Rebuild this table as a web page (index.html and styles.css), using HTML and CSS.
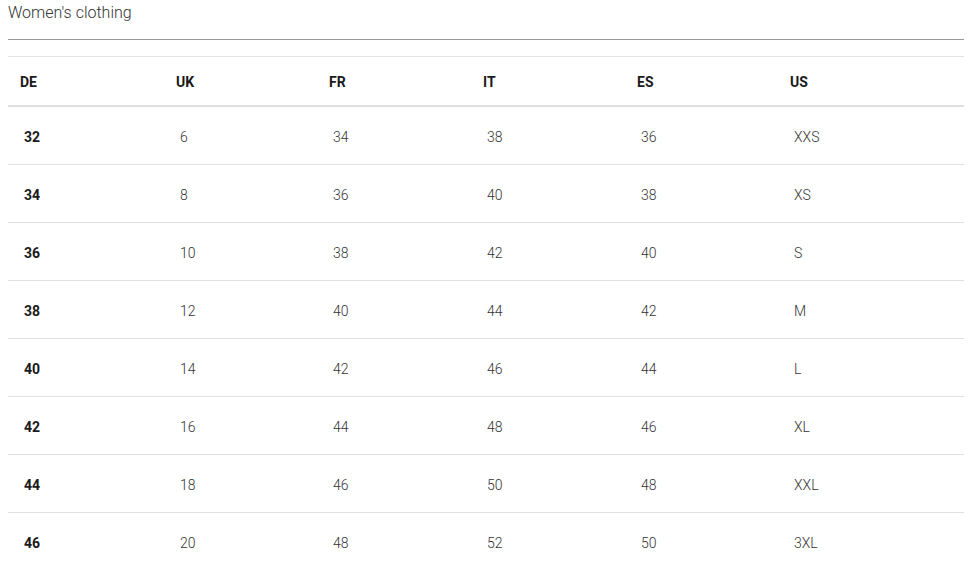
FILE: index.html
```html
<!DOCTYPE html>
<html>
<head>
<meta charset="utf-8">
<link rel="stylesheet" href="styles.css">
</head>
<body>
<div class="page">
  <div class="title">Women's clothing</div>
  <div class="chart">
    <div class="row head">
      <div class="cell">DE</div><div class="cell">UK</div><div class="cell">FR</div><div class="cell">IT</div><div class="cell">ES</div><div class="cell">US</div>
    </div>
    <div class="row"><div class="cell key">32</div><div class="cell">6</div><div class="cell">34</div><div class="cell">38</div><div class="cell">36</div><div class="cell">XXS</div></div>
    <div class="row"><div class="cell key">34</div><div class="cell">8</div><div class="cell">36</div><div class="cell">40</div><div class="cell">38</div><div class="cell">XS</div></div>
    <div class="row"><div class="cell key">36</div><div class="cell">10</div><div class="cell">38</div><div class="cell">42</div><div class="cell">40</div><div class="cell">S</div></div>
    <div class="row"><div class="cell key">38</div><div class="cell">12</div><div class="cell">40</div><div class="cell">44</div><div class="cell">42</div><div class="cell">M</div></div>
    <div class="row"><div class="cell key">40</div><div class="cell">14</div><div class="cell">42</div><div class="cell">46</div><div class="cell">44</div><div class="cell">L</div></div>
    <div class="row"><div class="cell key">42</div><div class="cell">16</div><div class="cell">44</div><div class="cell">48</div><div class="cell">46</div><div class="cell">XL</div></div>
    <div class="row"><div class="cell key">44</div><div class="cell">18</div><div class="cell">46</div><div class="cell">50</div><div class="cell">48</div><div class="cell">XXL</div></div>
    <div class="row last"><div class="cell key">46</div><div class="cell">20</div><div class="cell">48</div><div class="cell">52</div><div class="cell">50</div><div class="cell">3XL</div></div>
  </div>
</div>
</body>
</html>
```
FILE: styles.css
```css
html, body {
  margin: 0;
  padding: 0;
  background: #fff;
}
.page {
  padding: 0 10px 0 8px;
  font-family: Roboto, "Liberation Sans", sans-serif;
  color: #333;
}
.title {
  font-size: 16px;
  font-weight: 300;
  line-height: 18px;
  padding-top: 4px;
  height: 35px;
  color: #333;
  border-bottom: 1px solid #999;
  box-sizing: content-box;
}
.chart {
  margin-top: 16px;
  border-top: 1px solid #e3e3e3;
}
.row {
  display: grid;
  grid-template-columns: 156px 153px 154px 154px 153px 1fr;
  height: 57px;
  box-sizing: border-box;
  padding-top: 2px;
  align-items: center;
  border-bottom: 1px solid #e0e0e0;
  font-size: 14px;
  font-weight: 300;
}
.row:not(.head) {
  height: 58px;
}
.row.last {
  border-bottom: none;
}
.row .cell {
  padding-left: 16px;
}
.row.head {
  height: 50px;
  border-bottom: 2px solid #e0e0e0;
  font-weight: 700;
  color: #1a1a1a;
}
.row.head .cell {
  padding-left: 12px;
}
.cell.key {
  font-weight: 700;
  color: #1a1a1a;
}
```
